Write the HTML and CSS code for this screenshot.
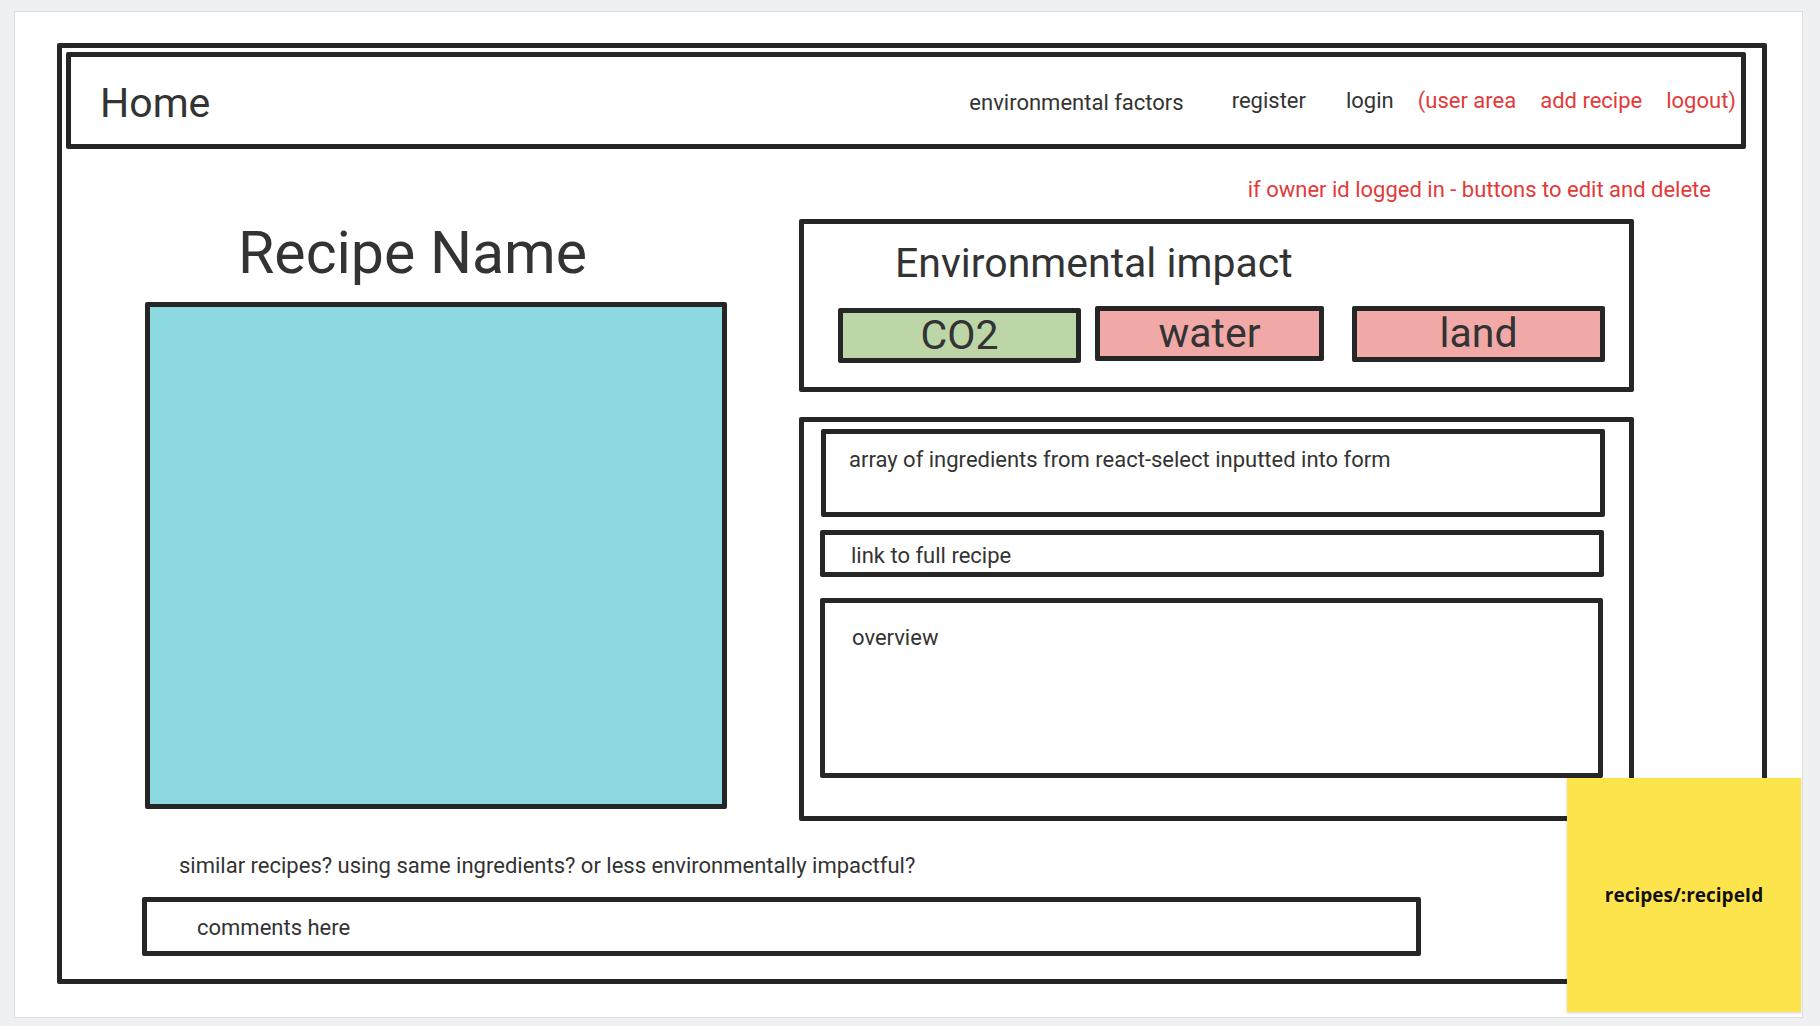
FILE: index.html
```html
<!DOCTYPE html>
<html lang="en">
<head>
    <meta charset="UTF-8">
    <title>recipes/:recipeId wireframe</title>
    <link rel="stylesheet" href="styles.css">
</head>
<body>
    <div class="board">
        <div class="frame">
            <!-- top navigation -->
            <header class="topbar">
                <span class="home">Home</span>
                <nav class="nav">
                    <span class="nav-item gap-l">environmental factors</span>
                    <span class="nav-item gap-m">register</span>
                    <span class="nav-item">login</span>
                    <span class="nav-item red">(user area</span>
                    <span class="nav-item red">add recipe</span>
                    <span class="nav-item red">logout)</span>
                </nav>
            </header>

            <p class="owner-note">if owner id logged in - buttons to edit and delete</p>

            <div class="main">
                <div class="recipe-col">
                    <h1 class="recipe-name">Recipe Name</h1>
                    <div class="recipe-image"></div>
                </div>

                <div class="info-col">
                    <section class="impact">
                        <h2>Environmental impact</h2>
                        <div class="impact-row">
                            <div class="badge co2">CO2</div>
                            <div class="badge water">water</div>
                            <div class="badge land">land</div>
                        </div>
                    </section>

                    <section class="details">
                        <div class="field ingredients">array of ingredients from react-select inputted into form</div>
                        <div class="field link">link to full recipe</div>
                        <div class="field overview">overview</div>
                    </section>
                </div>
            </div>

            <p class="similar">similar recipes? using same ingredients? or less environmentally impactful?</p>
            <div class="comments">comments here</div>
        </div>

        <!-- sticky note -->
        <div class="sticky">recipes/:recipeId</div>
    </div>
</body>
</html>
```

FILE: styles.css
```css
* {
    box-sizing: border-box;
}

body {
    margin: 0;
    background: #eef0f2;
    font-family: 'Roboto', 'Liberation Sans', sans-serif;
    color: #333;
}

.board {
    position: relative;
    margin: 11px 0 0 14px;
    width: 1789px;
    height: 1007px;
    background: #fff;
    border: 1px solid #dbdee2;
    overflow: hidden;
}

.frame {
    margin: 31px 0 0 42px;
    width: 1710px;
    height: 941px;
    border: 5px solid #262626;
    border-radius: 2px;
}

.topbar {
    display: flex;
    align-items: center;
    justify-content: space-between;
    margin: 4px 0 0 4px;
    width: 1680px;
    height: 97px;
    padding: 0 5px 0 29px;
    border: 5px solid #262626;
    border-radius: 2px;
}

.home {
    font-size: 41px;
    margin-top: 4px;
}

.nav {
    display: flex;
    align-items: center;
    gap: 24px;
    font-size: 22px;
}

.nav-item.gap-l {
    margin-right: 24px;
    margin-top: 3px;
}

.nav-item.gap-m {
    margin-right: 16px;
}

.red {
    color: #e23a3a;
}

.owner-note {
    margin: 29px 0 0;
    padding-right: 51px;
    text-align: right;
    font-size: 22px;
    line-height: 24px;
    color: #e23a3a;
}

.main {
    display: flex;
    align-items: flex-start;
    margin-top: 17px;
}

.recipe-col {
    margin-left: 83px;
    width: 582px;
}

.recipe-name {
    margin: 0;
    padding: 2px 0 0 93px;
    font-size: 59px;
    line-height: 64px;
    font-weight: normal;
}

.recipe-image {
    margin-top: 17px;
    height: 507px;
    background: #8cdae0;
    border: 5px solid #262626;
    border-radius: 2px;
}

.info-col {
    margin-left: 72px;
    width: 835px;
}

.impact {
    height: 173px;
    padding: 17px 0 0 34px;
    border: 5px solid #262626;
    border-radius: 2px;
}

.impact h2 {
    margin: 0;
    padding-left: 57px;
    font-size: 41px;
    line-height: 44px;
    font-weight: normal;
}

.impact-row {
    display: flex;
    align-items: flex-start;
    margin-top: 21px;
}

.badge {
    height: 55px;
    border: 5px solid #262626;
    border-radius: 2px;
    text-align: center;
    font-size: 41px;
    line-height: 45px;
}

.co2 {
    width: 243px;
    margin-top: 2px;
    background: #bcd6a8;
}

.water {
    width: 229px;
    margin-left: 14px;
    background: #f0a9a6;
}

.land {
    width: 253px;
    margin-left: 28px;
    height: 56px;
    background: #f0a9a6;
}

.details {
    margin-top: 25px;
    height: 404px;
    padding: 7px 0 0 17px;
    border: 5px solid #262626;
    border-radius: 2px;
}

.field {
    border: 5px solid #262626;
    border-radius: 2px;
    font-size: 22px;
    line-height: 24px;
}

.ingredients {
    width: 784px;
    height: 88px;
    padding: 14px 23px;
}

.link {
    margin: 13px 0 0 -1px;
    width: 784px;
    height: 47px;
    padding: 9px 26px;
}

.overview {
    margin: 21px 0 0 -1px;
    width: 783px;
    height: 180px;
    padding: 23px 27px;
}

.similar {
    margin: 33px 0 0 117px;
    font-size: 22px;
    line-height: 24px;
}

.comments {
    margin: 19px 0 0 80px;
    width: 1279px;
    height: 59px;
    padding: 14px 50px;
    border: 5px solid #262626;
    border-radius: 2px;
    font-size: 22px;
    line-height: 24px;
}

.sticky {
    position: absolute;
    left: 1552px;
    top: 766px;
    width: 234px;
    height: 234px;
    display: flex;
    align-items: center;
    justify-content: center;
    background: #fee44c;
    box-shadow: 0 1px 3px rgba(0, 0, 0, 0.18);
    font-family: 'Open Sans', 'Liberation Sans', sans-serif;
    font-weight: 700;
    font-size: 19px;
    color: #111;
}
```
